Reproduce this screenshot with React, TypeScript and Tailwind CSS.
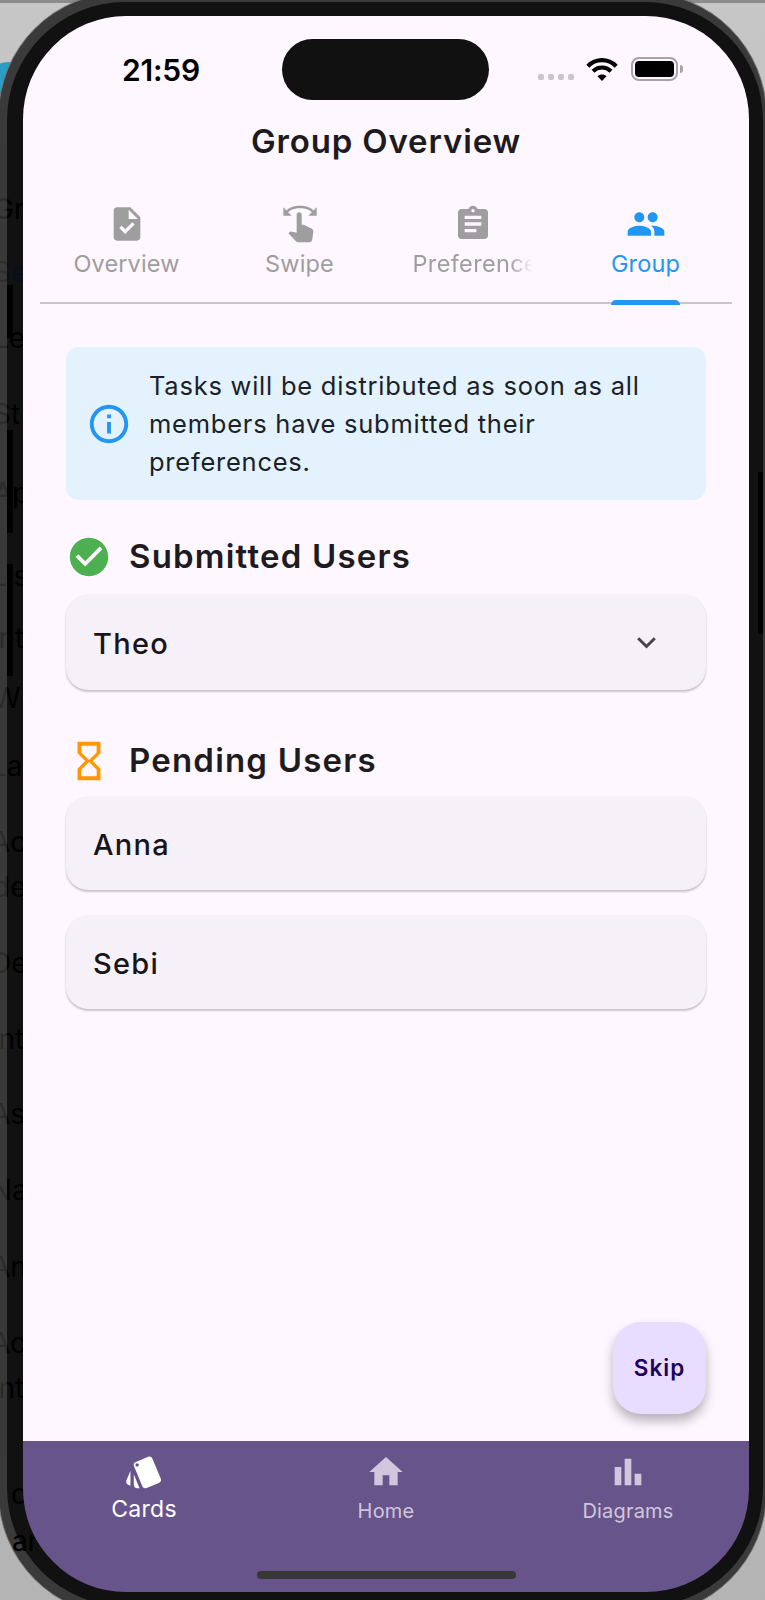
import { ReactNode } from "react";
import {
  MdTask,
  MdSwipe,
  MdAssignment,
  MdPeople,
  MdInfoOutline,
  MdCheckCircle,
  MdHourglassEmpty,
  MdStyle,
  MdHome,
  MdBarChart,
} from "react-icons/md";

type Ghost = { text: string; cls: string };

const ghosts: Ghost[] = [
  { text: "Gr", cls: "mt-[194px] pl-[13px]" },
  { text: "Se", cls: "mt-[33px] pl-[13px] text-[#05101c]" },
  { text: "Le", cls: "mt-[36px] pl-[13px]" },
  { text: "St", cls: "mt-[46px] pl-[13px]" },
  { text: "Ap", cls: "mt-[49px] pl-[13px]" },
  { text: "Lis", cls: "mt-[53px] pl-[11px]" },
  { text: "Int", cls: "mt-[32px] pl-[11px]" },
  { text: "W", cls: "mt-[30px] pl-[13px]" },
  { text: "La", cls: "mt-[38px] pl-[11px]" },
  { text: "Ac", cls: "mt-[46px] pl-[11px]" },
  { text: "de", cls: "mt-[15px] pl-[13px]" },
  { text: "De", cls: "mt-[46px] pl-[11px]" },
  { text: "Int", cls: "mt-[46px] pl-[11px]" },
  { text: "As", cls: "mt-[45px] pl-[11px]" },
  { text: "Na", cls: "mt-[46px] pl-[11px]" },
  { text: "An", cls: "mt-[47px] pl-[11px]" },
  { text: "Ac", cls: "mt-[46px] pl-[11px]" },
  { text: "Int", cls: "mt-[15px] pl-[11px]" },
  { text: "o", cls: "mt-[76px] pl-[31px]" },
  { text: "ar", cls: "mt-[17px] pl-[32px]" },
];

function StatusBar() {
  return (
    <div className="flex h-[84px] shrink-0 pt-[23px]">
      <div className="flex h-[60px] w-[259px] items-center pl-[99px] pt-[1px] text-[30px] font-semibold leading-none tracking-[-0.2px] text-black">
        21:59
      </div>
      <div className="h-[61px] w-[207px] rounded-full bg-[#111111]" />
      <div className="flex h-[60px] flex-1 items-center pl-[49px]">
        <div className="mt-[16px] flex gap-[4px]">
          <span className="size-[6px] rounded-[2px] bg-[#cac5cc]" />
          <span className="size-[6px] rounded-[2px] bg-[#cac5cc]" />
          <span className="size-[6px] rounded-[2px] bg-[#cac5cc]" />
          <span className="size-[6px] rounded-[2px] bg-[#cac5cc]" />
        </div>
        <svg className="ml-[12px] h-[23px] w-[32px]" viewBox="0 0 32 23">
          <path d="M1.8 8.2C9.8.2 22.2.2 30.2 8.2" fill="none" stroke="#000" strokeWidth="4.200" />
          <path d="M7 13.2c5.1-4.9 12.900-4.900 18 0" fill="none" stroke="#000" strokeWidth="4" />
          <path d="M16 23l-4.500-4.700c2.400-2.500 6.600-2.500 9 0z" fill="#000" />
        </svg>
        <div className="ml-[13px] h-[24px] w-[47px] rounded-[8px] border-2 border-[#a8a2ab] p-[2px]">
          <div className="h-full w-full rounded-[4px] bg-black" />
        </div>
        <div className="ml-[2px] h-[8px] w-[3px] rounded-r-full bg-[#a8a2ab]" />
      </div>
    </div>
  );
}

function Tab({ icon, label, active, fade }: { icon: ReactNode; label: string; active?: boolean; fade?: boolean }) {
  return (
    <div className={`flex flex-1 flex-col items-center ${active ? "text-[#2196f3]" : "text-[#9e9e9e]"}`}>
      <div className="text-[40px]">{icon}</div>
      <div
        className={
          fade
            ? "mt-[6px] w-[120px] overflow-hidden whitespace-nowrap text-[23.500px] leading-[28px] tracking-[0.350px] mask-r-from-80% mask-r-to-100%"
            : "mt-[6px] whitespace-nowrap text-[23.500px] leading-[28px] tracking-[0.150px]"
        }
      >
        {label}
      </div>
      {active && <div className="mt-[22px] h-[5px] w-[69px] shrink-0 rounded-t-[5px] bg-[#2196f3]" />}
    </div>
  );
}

function Heading({ icon, children }: { icon: ReactNode; children: ReactNode }) {
  return (
    <div className="flex h-[46px] items-center">
      <div className="text-[46px]">{icon}</div>
      <h2 className="mb-[2px] ml-[17px] text-[33px] font-semibold leading-none tracking-[1.200px] text-[#1d1b20]">
        {children}
      </h2>
    </div>
  );
}

function UserCard({ name, children }: { name: string; children?: ReactNode }) {
  return (
    <div
      className={`flex items-center justify-between rounded-[22px] bg-[#f6f1f8] pl-[27px] pr-[50px] shadow-[0_2px_2px_rgba(0,0,0,0.2),0_0_2px_rgba(0,0,0,0.08)] ${
        children ? "h-[95px] pt-[1px]" : "h-[93px] pt-[1px]"
      }`}
    >
      <span className="text-[29px] font-medium leading-none tracking-[1.300px] text-[#17151a]">{name}</span>
      {children}
    </div>
  );
}

function NavItem({ icon, label, active }: { icon: ReactNode; label: string; active?: boolean }) {
  return (
    <div className={`flex flex-1 flex-col items-center pt-[11px] ${active ? "text-white" : "text-[#d1c6dd]"}`}>
      <div className="text-[40px]">{icon}</div>
      <div
        className={
          active
            ? "mt-[3px] text-[23px] leading-[28px] tracking-[0.300px]"
            : "mt-[6px] text-[20px] leading-[26px] tracking-[0.200px]"
        }
      >
        {label}
      </div>
    </div>
  );
}

export default function App() {
  return (
    <div className="relative h-[1600px] w-[765px] overflow-hidden bg-gradient-to-b from-[#c6c6c6] to-[#b4b4b4] font-['Inter','Liberation_Sans',sans-serif]">
      <div className="absolute left-0 top-0 h-[3px] w-full bg-[#8b8b8b]" />
      <div className="absolute -left-[14px] top-[62px] h-[44px] w-[44px] rounded-full bg-[#2b9cc4]" />
      <div className="absolute -left-[2px] -top-[8px] h-[1624px] w-[769px] rounded-[124px] border border-[#777777] bg-[#3a3a3a]" />
      <div className="absolute left-[7px] top-[2px] h-[1604px] w-[756px] rounded-[118px] bg-[#111111]" />
      <div className="absolute left-[-20px] top-0 h-[1600px] w-[60px] overflow-hidden text-[28px] leading-[30px] text-black">
        {ghosts.map((g, i) => (
          <div key={i} className={`whitespace-nowrap ${g.cls}`}>
            {g.text}
          </div>
        ))}
      </div>
      <div className="absolute left-0 top-[145px] h-[1310px] w-[7px] bg-[#3a3a3a]/75" />
      <div className="absolute left-[7px] top-[285px] h-[53px] w-[6px] bg-black" />
      <div className="absolute left-[7px] top-[430px] h-[103px] w-[6px] bg-black" />
      <div className="absolute left-[7px] top-[564px] h-[112px] w-[6px] bg-black" />
      <div className="absolute left-[758px] top-[472px] h-[162px] w-[5px] bg-black" />

      <main className="absolute left-[23px] top-[16px] flex h-[1576px] w-[726px] flex-col overflow-hidden rounded-[103px]">
        <div className="flex flex-1 flex-col bg-[#fef7ff]">
          <StatusBar />
          <h1 className="mt-[21px] text-center text-[33px] font-semibold leading-[40px] tracking-[0.850px] text-[#1d1b20]">
            Group Overview
          </h1>
          <nav className="mx-[17px] mt-[43px] flex h-[100px] shrink-0 bg-[linear-gradient(#cac4d0,#cac4d0)] bg-[length:100%_2px] bg-bottom bg-no-repeat">
            <Tab icon={<MdTask />} label="Overview" />
            <Tab icon={<MdSwipe />} label="Swipe" />
            <Tab icon={<MdAssignment />} label="Preferences" fade />
            <Tab icon={<MdPeople />} label="Group" active />
          </nav>

          <section className="flex flex-1 flex-col px-[43px] pt-[43px]">
            <div className="flex h-[153px] items-center rounded-[13px] bg-[#e3f2fd] pl-[20px]">
              <MdInfoOutline className="shrink-0 text-[46px] text-[#2196f3]" />
              <p className="ml-[17px] w-[520px] text-[25.500px] leading-[38px] tracking-[0.760px] text-[#1b2127]">
                Tasks will be distributed as soon as all members have submitted their preferences.
              </p>
            </div>

            <div className="mt-[34px]">
              <Heading icon={<MdCheckCircle className="text-[#4caf50]" />}>Submitted Users</Heading>
            </div>
            <div className="mt-[15px]">
              <UserCard name="Theo">
                <svg className="h-[12px] w-[19px]" viewBox="0 0 19 12" fill="none" stroke="#49454f" strokeWidth="3">
                  <path d="M1.200 1.300l8.300 8.200 8.300-8.200" />
                </svg>
              </UserCard>
            </div>

            <div className="mt-[48px]">
              <Heading icon={<MdHourglassEmpty className="text-[#ff9800]" />}>Pending Users</Heading>
            </div>
            <div className="mt-[13px] flex flex-col gap-[26px]">
              <UserCard name="Anna" />
              <UserCard name="Sebi" />
            </div>

            <button className="mb-[27px] mt-auto flex h-[92px] w-[93px] items-center justify-center self-end rounded-[28px] bg-[#e8ddff] text-[22.500px] font-semibold tracking-[1px] text-[#21005d] shadow-[0_7px_11px_rgba(0,0,0,0.28)]">
              Skip
            </button>
          </section>
        </div>

        <footer className="flex h-[151px] shrink-0 flex-col items-center bg-[#67548b]">
          <div className="flex w-full flex-1">
            <NavItem icon={<MdStyle />} label="Cards" active />
            <NavItem icon={<MdHome />} label="Home" />
            <NavItem icon={<MdBarChart />} label="Diagrams" />
          </div>
          <div className="mb-[13px] h-[8px] w-[259px] rounded-full bg-[#383838]" />
        </footer>
      </main>
    </div>
  );
}
